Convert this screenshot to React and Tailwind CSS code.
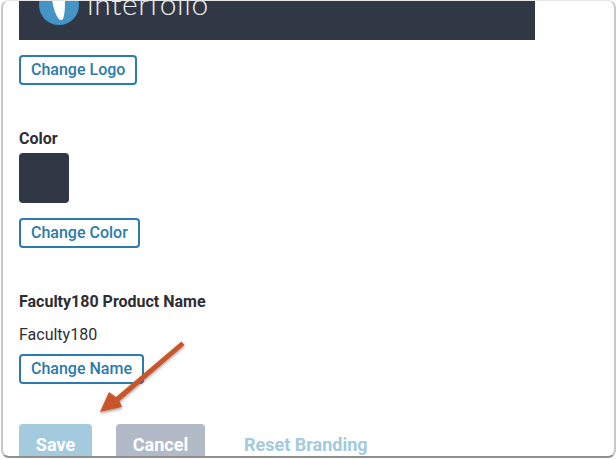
const outlineBtn =
  'block h-[30px] rounded-[4px] border-2 border-[#2b7bad] bg-white px-[10px] text-[16px] font-medium leading-[26px] text-[#2b7bad]';

function LogoBanner() {
  return (
    <div className="ml-[16px] flex h-[39px] w-[516px] items-start overflow-hidden bg-[#303745] pl-[20px]">
      <svg width="40" height="40" viewBox="0 0 40 40" className="-mt-[16px] shrink-0">
        <circle cx="20" cy="20" r="20" fill="#4494c6" />
        <path d="M13 14 C14 22 16 28 19 33 C20 35 23 36 24 34 C26 29 26 22 26 14 Z" fill="#fff" />
      </svg>
      <span className="-mt-[16px] ml-[8px] font-['Lato'] text-[30px] font-light leading-[36px] tracking-[0.6px] text-[#eef0f2]">
        interfolio
      </span>
    </div>
  );
}

function Arrow() {
  return (
    <svg className="absolute left-[95px] top-[336px]" width="100" height="90" viewBox="0 0 100 90">
      <defs>
        <filter id="arrowShadow" x="-20%" y="-20%" width="140%" height="140%">
          <feDropShadow dx="0" dy="1.5" stdDeviation="1.5" floodColor="#000" floodOpacity="0.4" />
        </filter>
      </defs>
      <path
        d="M86.5 5.5 L89.5 9 L24.5 65 L27 71 L5 76 L14 56 L21 61 Z"
        fill="#c9552c"
        filter="url(#arrowShadow)"
      />
    </svg>
  );
}

export default function App() {
  return (
    <div className="relative h-[460px] w-[616px] overflow-hidden bg-white font-['Roboto',sans-serif]">
      <div className="ml-px h-[458px] w-[615px] overflow-hidden rounded-[8px] border-x-2 border-t border-b-2 border-x-[#c9c9c9] border-t-[#e6e6e6] border-b-[#8f8f8f] bg-white">
        <LogoBanner />
        <div className="pl-[16px]">
          <button className={`${outlineBtn} mt-[15px]`}>Change Logo</button>

          <h3 className="mt-[45px] text-[16px] font-bold leading-[18px] text-[#2d2d33]">Color</h3>
          <div className="mt-[5px] h-[50px] w-[50px] rounded-[4px] bg-[#303745]" />
          <button className={`${outlineBtn} mt-[15px]`}>Change Color</button>

          <h3 className="mt-[45px] text-[16px] font-bold leading-[18px] text-[#2d2d33]">Faculty180 Product Name</h3>
          <p className="mt-[15px] text-[16px] leading-[18px] text-[#2d2d33]">Faculty180</p>
          <button className={`${outlineBtn} mt-[10px]`}>Change Name</button>

          <div className="mt-[40px] flex h-[33px] items-start">
            <button className="h-[40px] w-[73px] rounded-[4px] bg-[#a3cadd] text-[18px] font-bold text-white">Save</button>
            <button className="ml-[24px] h-[40px] w-[89px] rounded-[4px] bg-[#b2b9c7] text-[18px] font-bold text-white">Cancel</button>
            <button className="ml-[39px] h-[40px] text-[18px] font-bold text-[#a3cadd]">Reset Branding</button>
          </div>
        </div>
      </div>
      <Arrow />
    </div>
  );
}
